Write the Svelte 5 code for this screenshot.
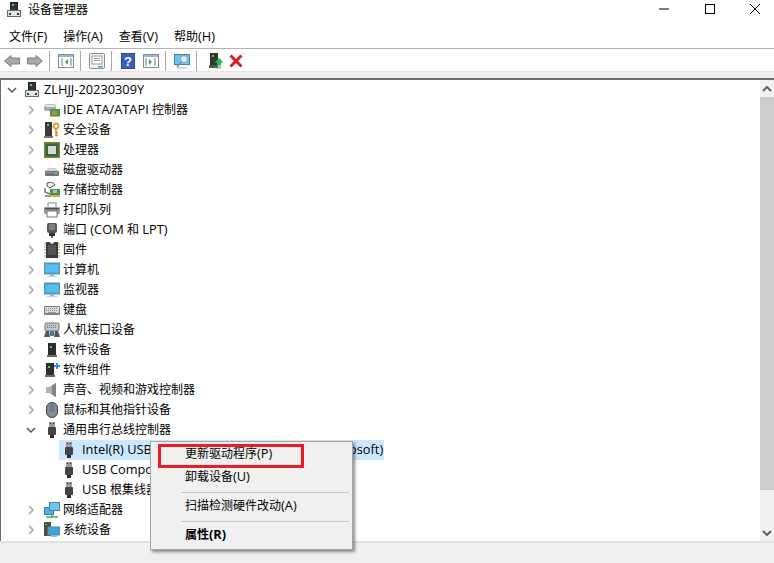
<script>
  const rows = [
    { level: 0, open: true, icon: 'tower', text: 'ZLHJJ-20230309Y' },
    { level: 1, icon: 'ide', text: 'IDE ATA/ATAPI 控制器' },
    { level: 1, icon: 'security', text: '安全设备' },
    { level: 1, icon: 'cpu', text: '处理器' },
    { level: 1, icon: 'disk', text: '磁盘驱动器' },
    { level: 1, icon: 'storage', text: '存储控制器' },
    { level: 1, icon: 'printer', text: '打印队列' },
    { level: 1, icon: 'port', text: '端口 (COM 和 LPT)' },
    { level: 1, icon: 'firmware', text: '固件' },
    { level: 1, icon: 'monitor', text: '计算机' },
    { level: 1, icon: 'monitor', text: '监视器' },
    { level: 1, icon: 'keyboard', text: '键盘' },
    { level: 1, icon: 'hid', text: '人机接口设备' },
    { level: 1, icon: 'soft', text: '软件设备' },
    { level: 1, icon: 'softplus', text: '软件组件' },
    { level: 1, icon: 'sound', text: '声音、视频和游戏控制器' },
    { level: 1, icon: 'mouse', text: '鼠标和其他指针设备' },
    { level: 1, open: true, icon: 'usb', text: '通用串行总线控制器' },
    { level: 2, icon: 'usb', selected: true, text: 'Intel(R) USB 3.10 可扩展主机控制器 - 1.10 (Microsoft)' },
    { level: 2, icon: 'usb', text: 'USB Composite Device' },
    { level: 2, icon: 'usb', text: 'USB 根集线器(USB 3.0)' },
    { level: 1, icon: 'network', text: '网络适配器' },
    { level: 1, icon: 'system', text: '系统设备' }
  ];
  const menus = ['文件(F)', '操作(A)', '查看(V)', '帮助(H)'];
  const seg = (s) => s.match(/[\x00-\x7f]+|[^\x00-\x7f]+/g).map((t) => ({ t, lat: t.charCodeAt(0) < 128 }));
</script>

{#snippet txt(s)}{#each seg(s) as p}<span class:lat={p.lat}>{p.t}</span>{/each}{/snippet}

{#snippet towerIcon()}
  <rect x="4.5" y="0.5" width="7" height="9" fill="#333" stroke="#222" />
  <rect x="6" y="2" width="2" height="2" fill="#3ddc4a" />
  <rect x="1.5" y="8.5" width="13" height="6" fill="#e4e4e4" stroke="#6a6a6a" />
  <rect x="3" y="11" width="2" height="2" fill="#333" />
  <rect x="11" y="11" width="2" height="2" fill="#333" />
{/snippet}

{#snippet icon(name)}
  <svg class="ico" viewBox="0 0 16 16" width="16" height="16" aria-hidden="true">
    {#if name === 'tower'}
      {@render towerIcon()}
    {:else if name === 'ide'}
      <rect x="0" y="4" width="12" height="5" rx="1.5" fill="#a9adb0" />
      <rect x="1" y="2.5" width="11" height="3" rx="1.5" fill="#e4e6e8" stroke="#8a8d90" stroke-width="0.5" />
      <rect x="6" y="7" width="10" height="8" fill="#3f9a54" />
      <rect x="8" y="9" width="5" height="4" fill="#c9862b" />
      <rect x="6" y="14" width="10" height="1" fill="#e0b040" />
    {:else if name === 'security'}
      <rect x="1" y="0" width="7" height="14" fill="#3a3a3a" />
      <rect x="3" y="2" width="2" height="2" fill="#3ddc4a" />
      <rect x="0" y="14" width="9" height="2" fill="#777" />
      <circle cx="12" cy="4" r="2.5" fill="none" stroke="#d6a32e" stroke-width="1.8" />
      <path d="M12 6.5V14M12 11h2M12 13.5h2" stroke="#c9922a" stroke-width="1.5" fill="none" />
    {:else if name === 'cpu'}
      <rect x="0" y="0" width="16" height="16" fill="#8d7a2e" />
      <rect x="1.5" y="1.5" width="13" height="13" fill="#2e6b45" />
      <rect x="4" y="4" width="8" height="8" fill="#d8d8d8" />
    {:else if name === 'disk'}
      <path d="M2 8 4 6h8l2 2v1H2z" fill="#cfd2d4" />
      <rect x="1" y="9" width="14" height="5" rx="1" fill="#6f7275" />
      <rect x="2" y="10" width="12" height="1" fill="#95989b" />
      <rect x="11" y="11" width="2" height="1.5" fill="#46e04e" />
    {:else if name === 'storage'}
      <path d="M3 1 8 0l3 3-5 3-3-2z" fill="#eee" stroke="#555" stroke-width="1" />
      <path d="M1 6v4l5 2" fill="none" stroke="#777" stroke-width="1.5" />
      <rect x="6" y="7" width="10" height="6" fill="#3c9653" />
      <rect x="9" y="8" width="4" height="3" fill="#bbb" />
      <rect x="6" y="13" width="10" height="2" fill="#dba83a" />
      <rect x="1" y="13" width="5" height="2" fill="#999" />
    {:else if name === 'printer'}
      <rect x="4" y="1" width="8" height="5" fill="#fff" stroke="#888" />
      <rect x="0" y="5" width="16" height="7" rx="1" fill="#9aa0a5" />
      <rect x="1" y="6" width="14" height="1.5" fill="#4e5256" />
      <rect x="3" y="9" width="10" height="6" fill="#fff" stroke="#777" />
    {:else if name === 'port'}
      <rect x="3" y="1" width="10" height="10" rx="2" fill="#555" />
      <path d="M5 3h6M5 5h6M5 7h6" stroke="#aaa" />
      <rect x="5" y="11" width="6" height="3" fill="#333" />
      <rect x="7" y="14" width="2" height="2" fill="#666" />
    {:else if name === 'firmware'}
      <rect x="2" y="0" width="12" height="16" fill="#3c3c3c" />
      <path d="M0 2h2M0 5h2M0 8h2M0 11h2M0 14h2M14 2h2M14 5h2M14 8h2M14 11h2M14 14h2" stroke="#999" />
      <path d="M6 0a2 2 0 0 0 4 0z" fill="#ddd" />
      <rect x="4" y="3" width="8" height="10" fill="#555" />
    {:else if name === 'monitor'}
      <rect x="0" y="1" width="16" height="11" fill="#3fa3dd" stroke="#6b8ea6" stroke-width="1" />
      <rect x="1.5" y="2.5" width="13" height="8" fill="#58bdf0" />
      <rect x="6" y="12" width="4" height="2" fill="#9fb0bb" />
      <rect x="3" y="14" width="10" height="1" fill="#c8d0d6" />
    {:else if name === 'keyboard'}
      <rect x="0" y="4" width="16" height="9" rx="1" fill="#7b7f82" />
      <rect x="1" y="5" width="14" height="6" fill="#d9dbdd" />
      <path d="M2 6.5h12M2 8.5h12" stroke="#8f9396" stroke-dasharray="1 1" />
      <rect x="4" y="10" width="8" height="1" fill="#999" />
    {:else if name === 'hid'}
      <rect x="1" y="1" width="14" height="8" rx="1" fill="#c4c7ca" stroke="#777" />
      <path d="M3 3.5h10M3 5.5h10" stroke="#777" stroke-dasharray="1 1" />
      <path d="M0 15 2 9h3l1 6zM10 15l1-6h3l2 6z" fill="#555" />
      <rect x="6" y="9" width="4" height="5" rx="1" fill="#4c6f9c" />
    {:else if name === 'soft'}
      <rect x="4" y="1" width="8" height="12" fill="#2d2d2d" />
      <rect x="6" y="4" width="2" height="2" fill="#3ddc4a" />
      <rect x="3" y="13" width="10" height="2" fill="#6a6a6a" />
    {:else if name === 'softplus'}
      <rect x="2" y="1" width="8" height="12" fill="#2d2d2d" />
      <rect x="4" y="4" width="2" height="2" fill="#3ddc4a" />
      <rect x="1" y="13" width="10" height="2" fill="#6a6a6a" />
      <path d="M13 1v6M10 4h6" stroke="#2f8fe0" stroke-width="2" />
    {:else if name === 'sound'}
      <path d="M2 5h3l7-4v14l-7-4H2z" fill="#aeb2b5" />
      <path d="M8 3.5v9l4 2.5V1z" fill="#7f8487" />
    {:else if name === 'mouse'}
      <rect x="2.5" y="0.5" width="11" height="15" rx="5.5" fill="#8b8f93" stroke="#3d3d3d" />
      <rect x="5.5" y="2" width="5" height="8" rx="2.5" fill="#6f7d90" />
    {:else if name === 'usb'}
      <rect x="5" y="0" width="6" height="5" fill="#9c9c9c" />
      <rect x="6" y="1" width="1" height="1" fill="#222" />
      <rect x="9" y="1" width="1" height="1" fill="#222" />
      <rect x="4" y="5" width="8" height="8" rx="1" fill="#444" />
      <rect x="6" y="13" width="4" height="3" fill="#2e2e2e" />
    {:else if name === 'network'}
      <rect x="0.5" y="5.5" width="9" height="7" fill="#4fb0e8" stroke="#4a7ea3" />
      <rect x="5.5" y="0.5" width="10" height="8" fill="#6cc4f2" stroke="#4a7ea3" />
      <path d="M8 12v3M2 15h12" stroke="#3cae4a" stroke-width="1.5" />
    {:else if name === 'system'}
      <rect x="0" y="0" width="7" height="14" fill="#4a4f52" />
      <rect x="1" y="2" width="2" height="1" fill="#3ddc4a" />
      <rect x="4" y="5" width="12" height="8" fill="#3fa3dd" stroke="#5b87a3" stroke-width="1" />
      <rect x="7" y="13" width="6" height="2" fill="#a8b4bc" />
    {/if}
  </svg>
{/snippet}

<div class="win">
  <header class="title">
    <svg class="title-ico" viewBox="0 0 16 16" width="16" height="16" aria-hidden="true">{@render towerIcon()}</svg>
    <span class="title-text">设备管理器</span>
    <div class="ctrls">
      <span class="ctrl"><svg viewBox="0 0 10 10" width="10" height="10"><path d="M0 5h10" stroke="#000" /></svg></span>
      <span class="ctrl"><svg viewBox="0 0 10 10" width="10" height="10"><rect x="0.5" y="0.5" width="9" height="9" fill="none" stroke="#000" /></svg></span>
      <span class="ctrl"><svg viewBox="0 0 10 10" width="10" height="10"><path d="M0 0l10 10M10 0 0 10" stroke="#000" /></svg></span>
    </div>
  </header>

  <nav class="menubar">
    {#each menus as m}<span class="mitem">{@render txt(m)}</span>{/each}
  </nav>

  <div class="toolbar">
    <svg class="tool" viewBox="0 0 16 16" width="16" height="16"><path d="M.500 8 7 2.500V5h8.500v6H7v2.500z" fill="#a8a8a8" stroke="#7e7e7e" /></svg>
    <svg class="tool fwd" viewBox="0 0 16 16" width="16" height="16"><path d="M15.500 8 9 2.500V5H.5v6H9v2.500z" fill="#a8a8a8" stroke="#7e7e7e" /></svg>
    <i class="sep"></i>
    <svg class="tool" viewBox="0 0 16 16" width="16" height="16"><rect x="0.500" y="1.500" width="15" height="13" fill="#fff" stroke="#7c8a94" /><rect x="1" y="2" width="14" height="2" fill="#9db6c8" /><path d="M3 6h2M3 8h2M3 10h2M3 12h2M12 6h2M12 8h2M12 10h2M12 12h2" stroke="#5a7f9a" /><path d="M10 6v6L7 9z" fill="#2fae4b" /></svg>
    <i class="sep"></i>
    <svg class="tool" viewBox="0 0 16 16" width="16" height="16"><rect x="0.500" y="0.500" width="15" height="15" rx="1" fill="#f4f4f4" stroke="#8a8a8a" /><rect x="3" y="3" width="10" height="8" fill="#fff" stroke="#999" /><path d="M5 5.500h6M5 7.500h6" stroke="#999" /><rect x="9" y="13" width="5" height="1.500" fill="#49a7e0" /></svg>
    <i class="sep"></i>
    <svg class="tool help" viewBox="0 0 14 16" width="14" height="16"><rect width="14" height="16" fill="#2b4aa8" /><rect x="1" y="1" width="12" height="14" fill="#3d5cc0" /><text x="7" y="13" text-anchor="middle" class="q">?</text></svg>
    <svg class="tool" viewBox="0 0 16 16" width="16" height="16"><rect x="0.500" y="1.500" width="15" height="13" fill="#fff" stroke="#7c8a94" /><rect x="1" y="2" width="14" height="2" fill="#9db6c8" /><path d="M11 6h2M11 8h2M11 10h2M11 12h2M2 6h2M2 8h2M2 10h2M2 12h2" stroke="#5a7f9a" /><path d="M6 6v6l3-3z" fill="#2fae4b" /></svg>
    <i class="sep"></i>
    <svg class="tool" viewBox="0 0 16 16" width="16" height="16"><rect x="0.500" y="1.500" width="15" height="10" fill="#6cc4f2" stroke="#4a7ea3" /><path d="M3 15h10" stroke="#aab4bc" /><circle cx="10" cy="6" r="3.500" fill="#d8eefa" stroke="#999" /><path d="M7 9l-4 5" stroke="#888" stroke-width="1.500" /></svg>
    <i class="sep"></i>
    <svg class="tool up" viewBox="0 0 16 16" width="16" height="16"><rect x="2" y="0" width="8" height="12" fill="#333" /><rect x="4" y="2" width="2" height="2" fill="#3ddc4a" /><rect x="1" y="12" width="9" height="3" fill="#555" /><path d="M11 5l4.500 4.500H13V12H9V9.500H6.500z" fill="#1fb84a" /><path d="M9 13h4M9 15h4" stroke="#1fb84a" /></svg>
    <svg class="tool del" viewBox="0 0 14 14" width="14" height="14"><path d="M1.500 1.500l11 11M12.500 1.500l-11 11" stroke="#dc1c24" stroke-width="3" /></svg>
  </div>
  <div class="band"></div>

  <div class="content">
    <div class="tree">
      {#each rows as r}
        <div class="row l{r.level}">
          {#if r.level < 2}
            <svg class="chev" viewBox="0 0 10 10" width="10" height="10" aria-hidden="true">
              {#if r.open}
                <path d="M1 3l4 4 4-4" fill="none" stroke="#555" stroke-width="1.500" />
              {:else}
                <path d="M3 1l4 4-4 4" fill="none" stroke="#a6a6a6" stroke-width="1.500" />
              {/if}
            </svg>
          {/if}
          <div class="entry" class:sel={r.selected}>
            {@render icon(r.icon)}
            <span class="label">{@render txt(r.text)}</span>
          </div>
        </div>
      {/each}
    </div>
    <div class="scroll">
      <div class="sbtn"><svg viewBox="0 0 10 6" width="10" height="6"><path d="M1 5l4-4 4 4" fill="none" stroke="#606060" stroke-width="2" /></svg></div>
      <div class="thumb"></div>
      <div class="sbtn end"><svg viewBox="0 0 10 6" width="10" height="6"><path d="M1 1l4 4 4-4" fill="none" stroke="#606060" stroke-width="2" /></svg></div>
    </div>
  </div>
  <div class="status"></div>

  <div class="ctx">
    <div class="mi h1">{@render txt('更新驱动程序(P)')}</div>
    <div class="mi">{@render txt('卸载设备(U)')}</div>
    <hr />
    <div class="mi">{@render txt('扫描检测硬件改动(A)')}</div>
    <hr />
    <div class="mi bold">{@render txt('属性(R)')}</div>
    <div class="redbox"></div>
  </div>
</div>

<style>
  :global(body) { margin: 0; background: #fff; }
  .win {
    position: relative; width: 774px; height: 563px; overflow: hidden;
    display: flex; flex-direction: column; background: #fff; color: #000;
    font: 12px/16px "Open Sans", "Noto Sans CJK SC", sans-serif;
  }
  .lat { font-size: 12.8px; line-height: 0; }
  .title { height: 24px; flex: none; display: flex; align-items: flex-start; padding-left: 6px; }
  .title-ico { margin-top: 2px; }
  .title-text { margin: 2px 0 0 6px; }
  .ctrls { margin-left: auto; display: flex; margin-right: -3.75px; padding-top: 4px; }
  .ctrl { width: 45.5px; display: flex; justify-content: center; }
  .ctrl svg { display: block; }
  .menubar { flex: none; display: flex; align-items: center; gap: 16px; padding: 1px 0 0 9px; height: 23px; border-bottom: 1px solid #b4b4b4; }
  .toolbar { flex: none; display: flex; align-items: center; padding: 2px 0 0 4px; height: 20px; }
  .tool { display: block; flex: none; }
  .fwd { margin-left: 7px; }
  .help { margin: 0 8px 0 1px; }
  .up { margin-left: 3px; }
  .del { margin-left: 5px; }
  .q { font: bold 13px "Liberation Sans", sans-serif; fill: #fff; }
  .sep { width: 1px; height: 20px; background: #a8a8a8; margin: 0 8px 0 6px; flex: none; }
  .band { height: 9px; flex: none; background: #f0f0f0; border-top: 1px solid #e4e4e4; border-bottom: 2px solid #6d6d6d; box-sizing: border-box; }
  .content { height: 461px; flex: none; display: flex; border-left: 1px solid #6d6d6d; }
  .tree { flex: 1; min-width: 0; overflow: hidden; }
  .row { height: 20px; display: flex; align-items: center; white-space: nowrap; }
  .l0 { padding-left: 6px; }
  .l1 { padding-left: 25px; }
  .l2 { padding-left: 58px; }
  .chev { flex: none; margin-right: 7px; display: block; }
  .l0 .chev { margin-right: 6px; }
  .entry { display: flex; align-items: center; height: 20px; }
  .sel { background: #cce8ff; padding-right: 1px; }
  .ico { flex: none; display: block; margin: 0 3px 0 1px; }
  .l0 .ico { margin-right: 4px; }
  .l2 .ico { margin: 0 5px 0 2px; }
  .scroll { width: 14px; flex: none; background: #f0f0f0; display: flex; flex-direction: column; }
  .sbtn { height: 17px; flex: none; display: flex; align-items: center; justify-content: center; }
  .end { margin-top: auto; }
  .thumb { height: 393px; flex: none; background: #cdcdcd; }
  .status { flex: 1; background: #f0f0f0; border-top: 2px solid #e2e2e2; }
  .ctx {
    position: absolute; left: 150px; top: 441px; width: 201px; height: 106px;
    background: #f0f0f0; border: 1px solid #a6a6a6;
    box-shadow: 2px 2px 3px rgba(0, 0, 0, 0.45);
    padding-top: 1px;
  }
  .mi { height: 22px; line-height: 20px; padding-left: 34px; }
  .mi.h1 { height: 24px; line-height: 22px; }
  .bold { font-weight: 700; }
  hr { border: 0; height: 1px; background: #c6c6c6; margin: 3px 3px 3px 30px; }
  .redbox { position: absolute; left: 7px; top: 2px; width: 140px; height: 18px; border: 3px solid #ed1c24; }
</style>
